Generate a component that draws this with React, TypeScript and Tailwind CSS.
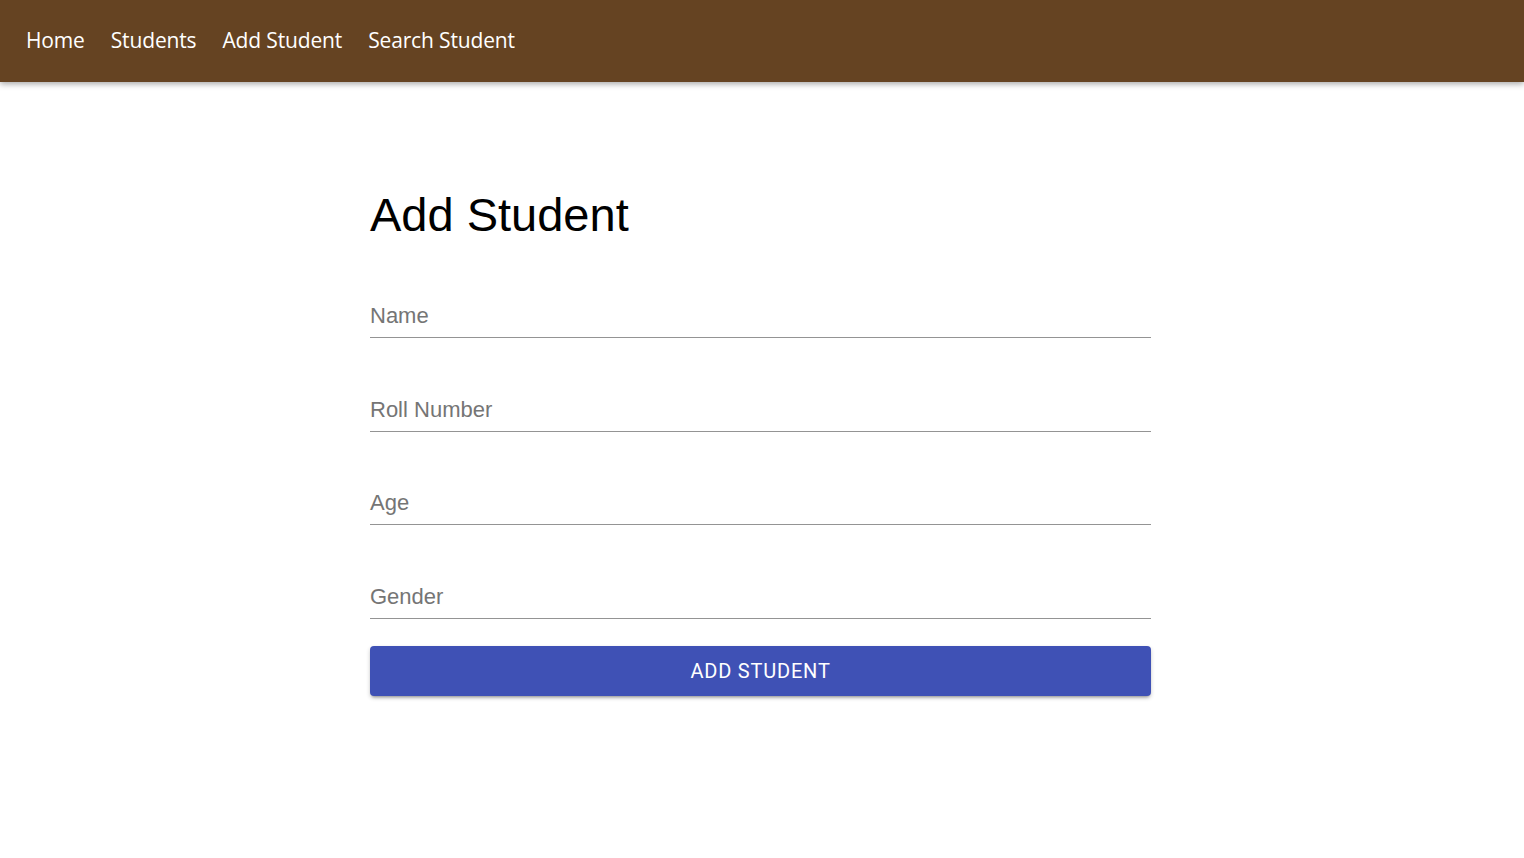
import React from 'react';

const links = ['Home', 'Students', 'Add Student', 'Search Student'];
const fields = ['Name', 'Roll Number', 'Age', 'Gender'];

function NavBar() {
  return (
    <nav className="h-[82px] bg-[#654322] flex items-center px-[26px] gap-[26px] shadow-[0_2px_6px_rgba(0,0,0,0.35)] relative z-10">
      {links.map((l) => (
        <a key={l} className="text-white text-[21px] leading-none font-['Open_Sans',sans-serif] tracking-[-0.15px] -mt-[2px]">
          {l}
        </a>
      ))}
    </nav>
  );
}

export default function App() {
  return (
    <div className="min-h-screen bg-white font-['Liberation_Sans',Arial,sans-serif]">
      <NavBar />
      <div className="flex justify-center pr-[3px]">
        <main className="w-[781px] pt-[104px]">
          <h1 className="text-[47px] leading-[58px] text-black">Add Student</h1>
          <form className="flex flex-col">
            {fields.map((f, i) => (
              <div
                key={f}
                className={`${i === 2 ? 'h-[93px]' : 'h-[94px]'} flex items-end border-b border-[#949494] pb-[8px]`}
              >
                <span className="text-[22px] leading-[26px] text-[#757575]">{f}</span>
              </div>
            ))}
            <button
              type="button"
              className="mt-[27px] h-[50px] w-full rounded-[4px] bg-[#3f51b5] text-white text-[20px] font-normal tracking-[0.8px] font-['Roboto',sans-serif] shadow-[0_3px_3px_-2px_rgba(0,0,0,0.3),0_2px_4px_rgba(0,0,0,0.2)]"
            >
              ADD STUDENT
            </button>
          </form>
        </main>
      </div>
    </div>
  );
}
